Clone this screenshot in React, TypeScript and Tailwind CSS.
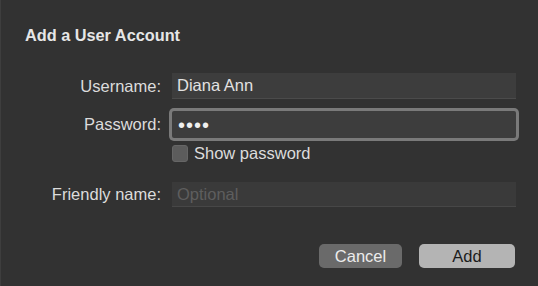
const font = { fontFamily: '"Liberation Sans", Arial, sans-serif' };

function Label({ children }: { children: string }) {
  return (
    <div className="w-[136px] shrink-0 text-right text-[16.5px] leading-none text-[#dcdcdc]">
      {children}
    </div>
  );
}

export default function App() {
  return (
    <div
      className="w-[538px] h-[286px] bg-[#323232] border-l border-[#3e3e3e] pl-[24px] pr-[22px] pt-[26px] flex flex-col"
      style={font}
    >
      <div className="text-[16.3px] font-bold leading-[19px] text-[#e6e6e6]">
        Add a User Account
      </div>

      <div className="mt-[28px] flex items-center gap-[11px]">
        <Label>Username:</Label>
        <div className="flex-1 h-[26px] bg-[#3d3d3d] border-b border-[#4b4b4b] flex items-center px-[5px] text-[16.5px] text-[#e2e2e2]">
          Diana Ann
        </div>
      </div>

      <div className="mt-[12px] flex items-center gap-[11px]">
        <Label>Password:</Label>
        <div className="flex-1 h-[27px] bg-[#3d3d3d] rounded-[2px] shadow-[0_0_0_3px_#7a7a7a] flex items-center px-[6px] text-[20px] tracking-[1px] text-[#f0f0f0]">
          ••••
        </div>
      </div>

      <div className="mt-[7px] ml-[147px] flex items-center gap-[6px]">
        <div className="w-[16px] h-[17px] rounded-[3px] bg-[#5c5c5c] border border-[#666]" />
        <span className="text-[16.5px] leading-none text-[#dcdcdc]">Show password</span>
      </div>

      <div className="mt-[20px] flex items-center gap-[11px]">
        <Label>Friendly name:</Label>
        <div className="flex-1 h-[25px] bg-[#3a3a3a] border-b border-[#474747] flex items-center px-[5px] text-[16.5px] text-[#5e5e5e]">
          Optional
        </div>
      </div>

      <div className="mt-[37px] flex justify-end gap-[17px] pr-[1px]">
        <button className="w-[83px] h-[24px] rounded-[5px] bg-[#6a6a6a] text-[16.5px] text-[#ececec] leading-none">
          Cancel
        </button>
        <button className="w-[96px] h-[24px] rounded-[5px] bg-[#b4b4b4] text-[16.5px] text-[#1c1c1c] leading-none">
          Add
        </button>
      </div>
    </div>
  );
}
